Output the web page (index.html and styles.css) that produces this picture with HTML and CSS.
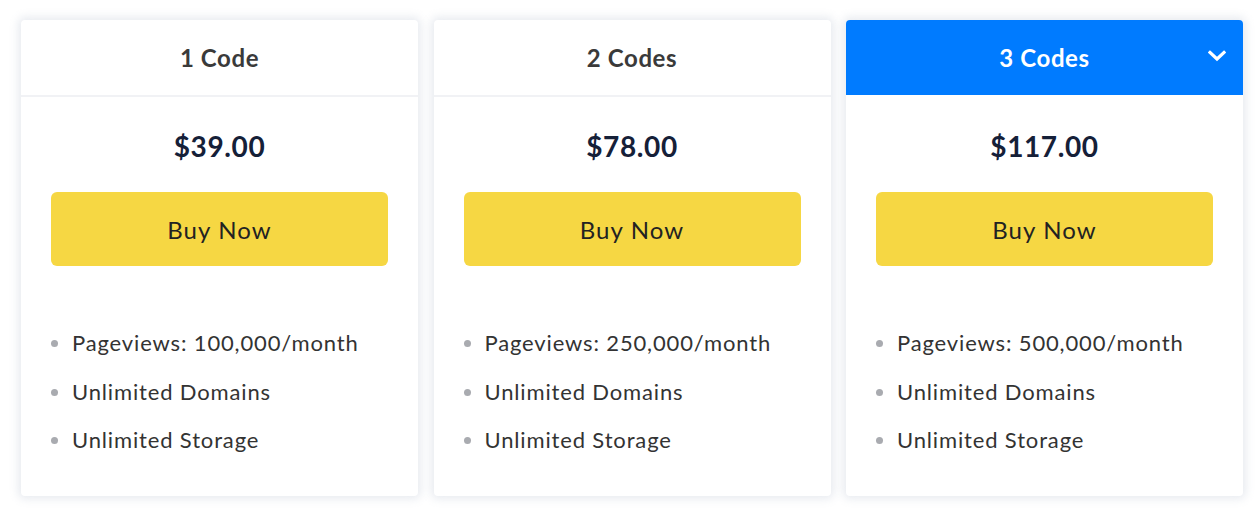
FILE: index.html
```html
<!DOCTYPE html>
<html lang="en">
<head>
<meta charset="utf-8">
<title>Pricing</title>
<link rel="stylesheet" href="styles.css">
</head>
<body>
<div class="plans">
  <div class="card">
    <div class="card-head">1 Code</div>
    <div class="card-body">
      <div class="price">$39.00</div>
      <button class="buy">Buy Now</button>
      <ul class="features">
        <li>Pageviews: 100,000/month</li>
        <li>Unlimited Domains</li>
        <li>Unlimited Storage</li>
      </ul>
    </div>
  </div>
  <div class="card">
    <div class="card-head">2 Codes</div>
    <div class="card-body">
      <div class="price">$78.00</div>
      <button class="buy">Buy Now</button>
      <ul class="features">
        <li>Pageviews: 250,000/month</li>
        <li>Unlimited Domains</li>
        <li>Unlimited Storage</li>
      </ul>
    </div>
  </div>
  <div class="card">
    <div class="card-head active">3 Codes
      <svg class="chev" width="18" height="12" viewBox="0 0 18 12"><path d="M2 2.5 L9 9 L16 2.5" fill="none" stroke="#fff" stroke-width="3.2" stroke-linecap="square"/></svg>
    </div>
    <div class="card-body">
      <div class="price">$117.00</div>
      <button class="buy">Buy Now</button>
      <ul class="features">
        <li>Pageviews: 500,000/month</li>
        <li>Unlimited Domains</li>
        <li>Unlimited Storage</li>
      </ul>
    </div>
  </div>
</div>
</body>
</html>
```

FILE: styles.css
```css
html, body {
  margin: 0;
  padding: 0;
  background: #ffffff;
}
body {
  font-family: "Lato", "Noto Sans", sans-serif;
  color: #333;
}
.plans {
  display: grid;
  grid-template-columns: repeat(3, 1fr);
  column-gap: 15.5px;
  padding: 20px 17px 17px 21px;
}
.card {
  background: #fff;
  border-radius: 4px;
  box-shadow: 0 0 9px 3px rgba(205, 210, 222, 0.45);
  height: 476px;
  overflow: hidden;
}
.card-head {
  position: relative;
  box-sizing: border-box;
  height: 77px;
  border-bottom: 2px solid #f1f2f5;
  display: flex;
  align-items: center;
  justify-content: center;
  font-size: 24px;
  font-weight: 700;
  letter-spacing: 0.6px;
  color: #3a3a3a;
}
.card-head.active {
  background: #007bff;
  color: #fff;
  border-bottom-color: #fff;
}
.chev {
  position: absolute;
  right: 17px;
  top: 30px;
}
.card-body {
  padding: 0 30px;
  text-align: center;
}
.price {
  margin-top: 33px;
  font-size: 28px;
  font-weight: 700;
  color: #152038;
  line-height: 32px;
  letter-spacing: 0.6px;
}
.buy {
  display: block;
  width: 100%;
  height: 74px;
  margin-top: 30px;
  border: none;
  border-radius: 6px;
  background: #f6d743;
  font-family: inherit;
  font-size: 24px;
  color: #222;
  letter-spacing: 1.1px;
  cursor: pointer;
}
.features {
  list-style: none;
  margin: 53px 0 0;
  padding: 0;
  text-align: left;
}
.features li {
  position: relative;
  padding-left: 21px;
  font-size: 22px;
  line-height: 48.5px;
  color: #333;
  letter-spacing: 0.85px;
}
.features li::before {
  content: "";
  position: absolute;
  left: 0;
  top: 21px;
  width: 7px;
  height: 7px;
  border-radius: 50%;
  background: #a9abb0;
}
```
